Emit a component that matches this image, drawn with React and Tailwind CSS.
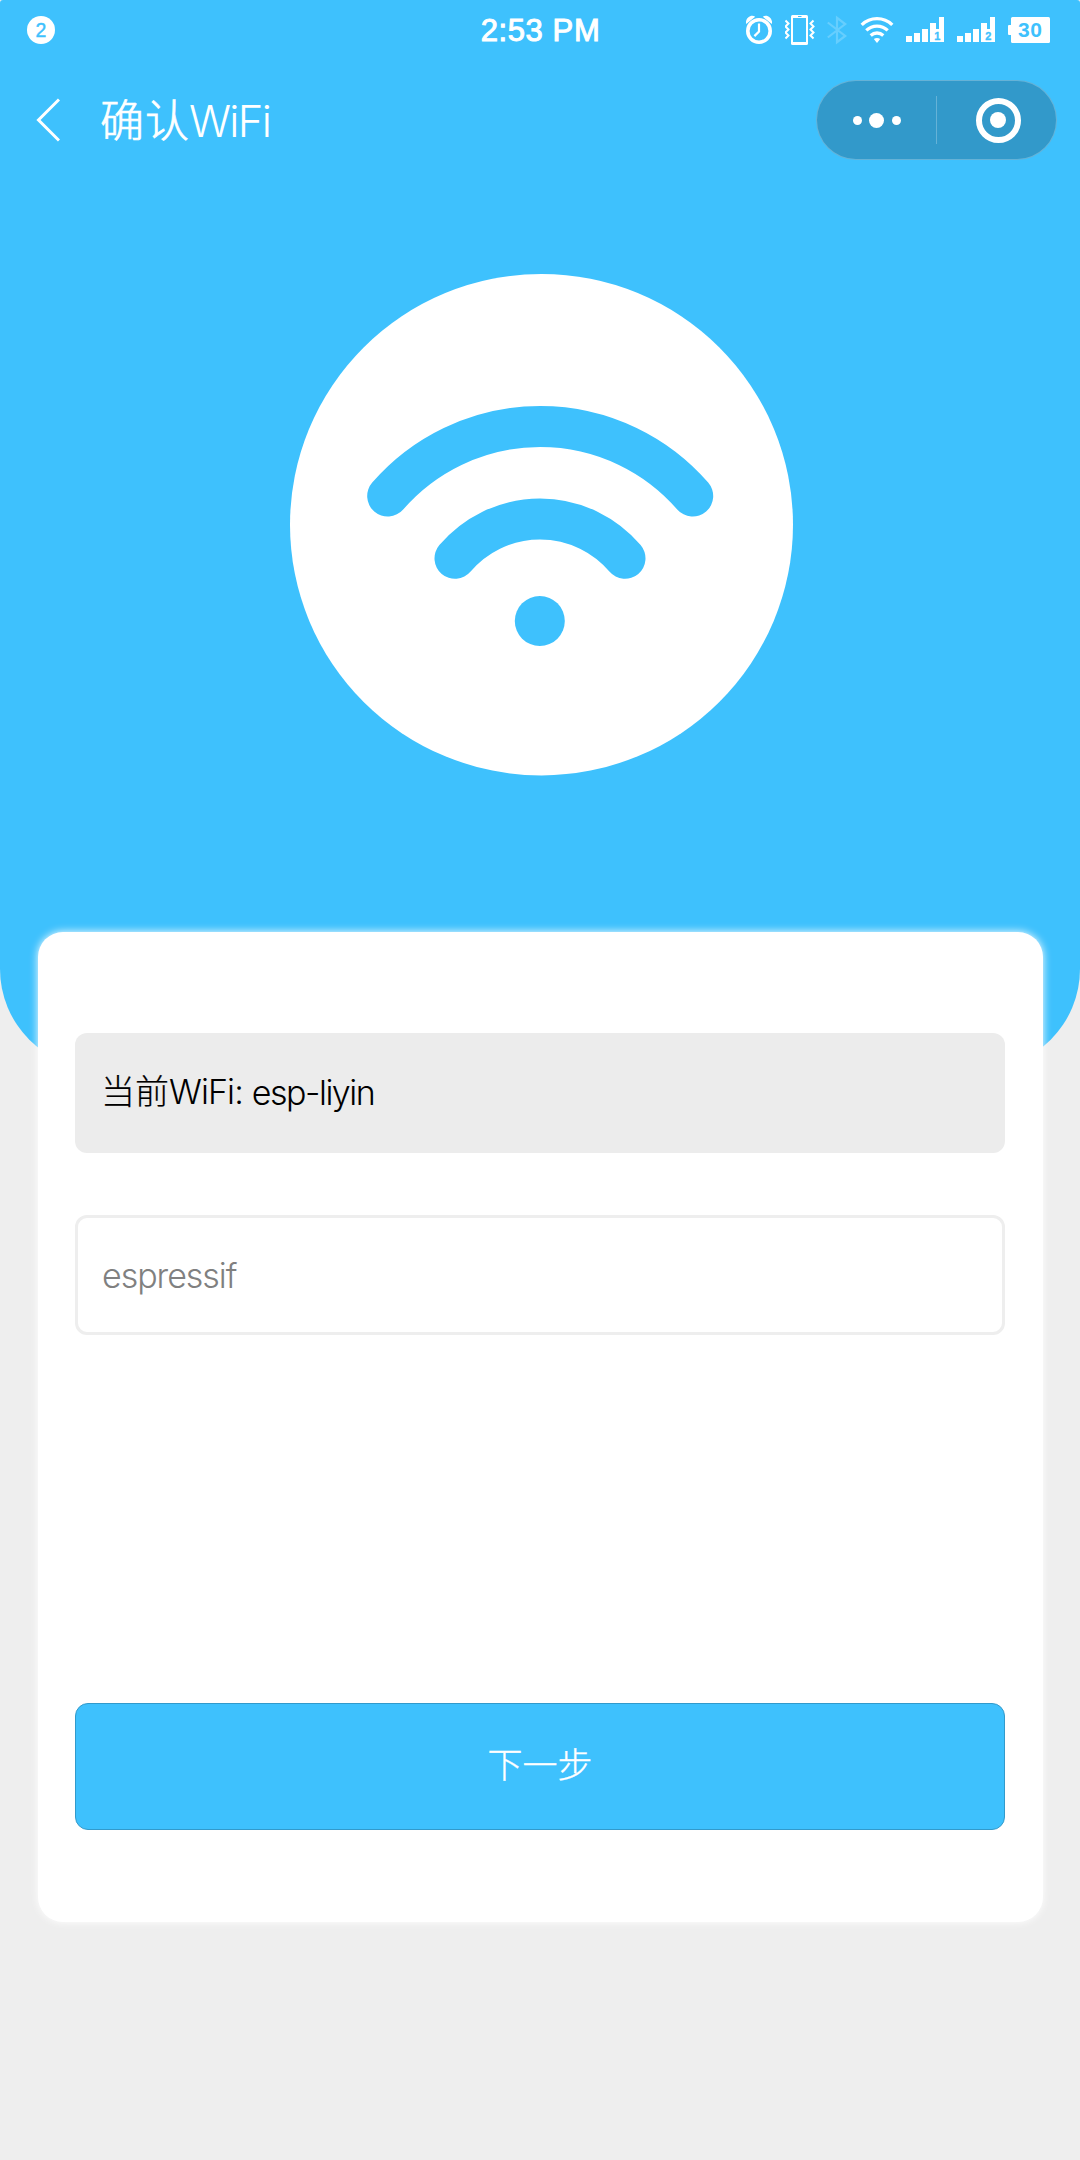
const LATIN = "font-['Inter','Noto_Sans_CJK_SC',sans-serif]";

function AlarmIcon() {
  return (
    <svg className="h-8 w-[26px]" viewBox="746 14 26 32" fill="none" stroke="#fff">
      <circle cx="759" cy="31" r="11.2" strokeWidth="3.6" />
      <path d="M746.2 24c-1.6-5.500 5-10.500 9-7.200zM771.800 24c1.600-5.500-5-10.500-9-7.200z" fill="#fff" stroke="none" />
      <path d="M759 23.500v8l-4.600 4.600" strokeWidth="2.200" />
    </svg>
  );
}

function VibrateIcon() {
  return (
    <svg className="h-8 w-[30px]" viewBox="785 14 30 32" fill="none" stroke="#fff">
      <rect x="791" y="15" width="17" height="30" rx="1.500" fill="#fff" stroke="none" />
      <rect x="793" y="18" width="13" height="24" fill="#3ec1fd" stroke="none" />
      <path d="M798 16.500h3.500" stroke="#3ec1fd" strokeWidth="1" />
      <path d="M785.500 20.500l3 3-3 3 3 3-3 3 3 3-3 3" strokeWidth="2" />
      <path d="M813.500 20.500l-3 3 3 3-3 3 3 3-3 3 3 3" strokeWidth="2" />
    </svg>
  );
}

function BluetoothIcon() {
  return (
    <svg className="h-8 w-5" viewBox="827 14 20 32" fill="none" stroke="#66cefe" strokeWidth="2.200">
      <path d="M827.800 22.500l17.400 13.500-8.200 6.200v-24.400l8.200 6.200-17.400 13.500" />
    </svg>
  );
}

function WifiIcon() {
  return (
    <svg className="h-8 w-[34px]" viewBox="859.500 14 34 32" fill="none" stroke="#fff" strokeWidth="3.300">
      <path d="M861.200 24.900a22 22 0 0 1 30.600 0" />
      <path d="M865.800 30.400a15.600 15.600 0 0 1 21.400 0" />
      <path d="M870.200 35.400a9.500 9.500 0 0 1 12.600 0" />
      <path d="M873.300 39q3.200-2.200 6.400 0l-3.200 4z" fill="#fff" stroke="none" />
    </svg>
  );
}

function SignalIcon({ sim }) {
  return (
    <svg className="h-8 w-[38px]" viewBox="0 14 38 32" fill="#fff">
      <path d="M0 36h6v6H0zM8 33h6v9H8zM16 29h6v13h-6zM24 23h6v6h3V17h5v25H24z" />
      <text x="31.300" y="39.500" textAnchor="middle" fontSize="11" fontWeight="700" fill="#3ec1fd" stroke="#3ec1fd" strokeWidth="0.300" fontFamily="Liberation Sans, sans-serif">
        {sim}
      </text>
    </svg>
  );
}

function BatteryIcon() {
  return (
    <svg className="h-8 w-[42px]" viewBox="1008 14 42 32" fill="#fff">
      <rect x="1011" y="17" width="39" height="26" rx="1.500" />
      <rect x="1008" y="25" width="5" height="10" rx="1" />
      <text x="1030" y="37" textAnchor="middle" fontSize="21" fontWeight="700" fill="#3ec1fd" fontFamily="Liberation Sans, sans-serif" textLength="24">
        30
      </text>
    </svg>
  );
}

function StatusBar() {
  return (
    <div className="grid h-[60px] grid-cols-[1fr_auto_1fr] items-center pr-[30px] pl-[27px]">
      <div className="flex size-7 items-center justify-center rounded-full bg-white pt-px font-['Liberation_Sans',sans-serif] text-[19.500px] text-[#3ec1fd] [-webkit-text-stroke:0.4px]">
        2
      </div>
      <div className="ml-1 font-['Liberation_Sans',sans-serif] text-[31px] leading-none tracking-[0.600px] text-white [-webkit-text-stroke:1px]">
        2:53 PM
      </div>
      <div className="flex items-center justify-end">
        <AlarmIcon />
        <div className="ml-[13px] flex"><VibrateIcon /></div>
        <div className="ml-3 flex"><BluetoothIcon /></div>
        <div className="ml-[12.500px] flex"><WifiIcon /></div>
        <div className="ml-[12.500px] flex"><SignalIcon sim="1" /></div>
        <div className="ml-[13px] flex"><SignalIcon sim="2" /></div>
        <div className="ml-[13px] flex"><BatteryIcon /></div>
      </div>
    </div>
  );
}

function NavBar() {
  return (
    <div className="flex h-[120px] items-center pr-[23px] pl-9">
      <svg className="h-11 w-6" viewBox="0 0 24 44" fill="none" stroke="#fff" strokeWidth="3">
        <path d="M23 1.500L2.500 22L23 42.500" />
      </svg>
      <h1 className="mt-px ml-10 flex items-baseline leading-[60px] font-light text-white">
        <span className="text-[44px] tracking-[1px] [-webkit-text-stroke:0.7px]">确认</span>
        <span className="-ml-px text-[43.500px] tracking-[-1.700px]">WiFi</span>
      </h1>
      <div className="ml-auto flex h-20 w-[241px] items-center rounded-full border border-white/25 bg-[#3299ca]">
        <div className="flex w-[119px] items-center justify-center gap-[7.500px]">
          <span className="size-[9px] rounded-full bg-white" />
          <span className="size-[15px] rounded-full bg-white" />
          <span className="size-[9px] rounded-full bg-white" />
        </div>
        <span className="h-12 w-px bg-white/25" />
        <div className="flex flex-1 justify-center">
          <div className="ml-[3px] flex size-[45px] items-center justify-center rounded-full border-[6px] border-white">
            <span className="size-4 rounded-full bg-white" />
          </div>
        </div>
      </div>
    </div>
  );
}

function WifiLogo() {
  return (
    <svg className="mt-[94px] ml-[290px] h-[502px] w-[504px]" viewBox="289.500 274 504 502" fill="none" stroke="#3ec1fd" strokeWidth="41" strokeLinecap="round">
      <ellipse cx="541" cy="524.700" rx="251.500" ry="250.700" fill="#fff" stroke="none" />
      <path d="M387.200 496A202 202 0 0 1 692.200 496" />
      <path d="M454.500 558.300A111.600 111.600 0 0 1 624.500 558.300" />
      <circle cx="539.300" cy="621" r="25" fill="#3ec1fd" stroke="none" />
    </svg>
  );
}

export default function App() {
  return (
    <div className={`${LATIN} flex h-[2160px] w-[1080px] flex-col overflow-hidden bg-[#eee]`}>
      <header className="flex h-[1069px] shrink-0 flex-col rounded-t-[3px] rounded-b-[100px] bg-[#3ec1fd]">
        <StatusBar />
        <NavBar />
        <WifiLogo />
      </header>
      <main className="mx-[37.500px] -mt-[137px] flex h-[990px] shrink-0 flex-col rounded-[25px] bg-white px-[37.500px] pt-[100.500px] font-light shadow-[0_0_9px_#fff]">
        <div className="flex h-[120px] items-center rounded-[12px] bg-[#ececec] pl-[26px] text-black">
          <span className="-mt-[3px] text-[34px] [-webkit-text-stroke:0.2px]">当前</span>
          <span className="-mt-[3px] text-[34px] tracking-[-0.900px]">WiFi:</span>
          <span className="ml-[9px] text-[34px] tracking-[-1.500px]">esp-liyin</span>
        </div>
        <input
          className="mt-[62.500px] h-[120px] rounded-[12px] border-[3px] border-[#eee] pt-px pl-[24px] text-[34px] tracking-[-1.050px] text-[#808080] outline-none"
          defaultValue="espressif"
        />
        <button className="mt-[368px] h-[127px] rounded-[13px] border border-[#329acb] bg-[#3ec1fd] pb-0.5 text-[35px] text-white [-webkit-text-stroke:0.4px]">
          下一步
        </button>
      </main>
    </div>
  );
}
